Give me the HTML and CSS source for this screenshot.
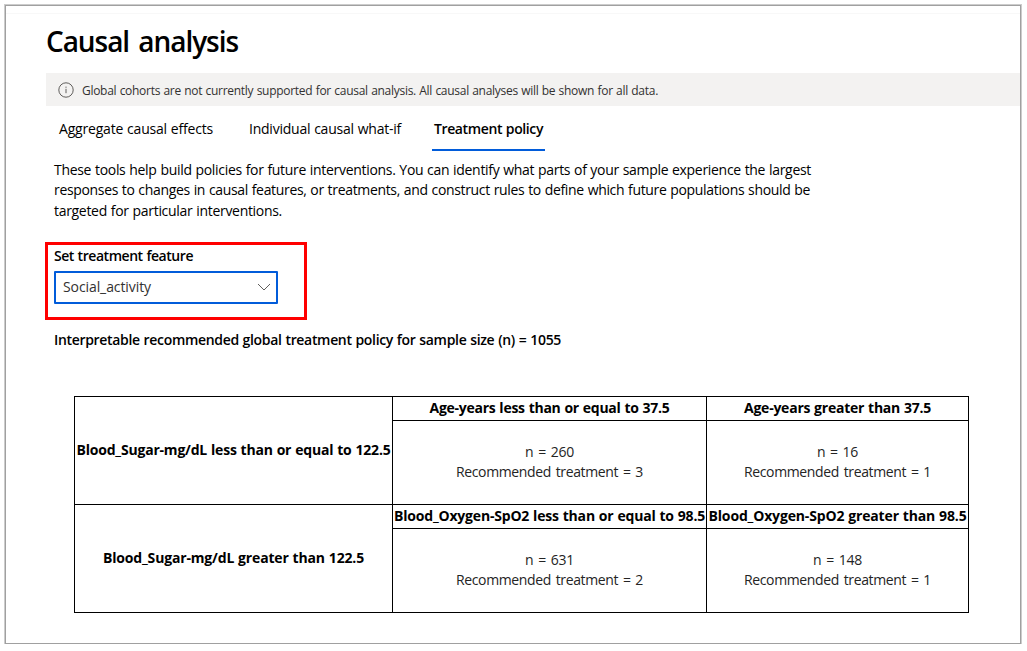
FILE: index.html
```html
<!DOCTYPE html>
<html lang="en"><head><meta charset="utf-8"><title>Causal analysis</title><link rel="stylesheet" href="styles.css"></head>
<body>
<main class="panel">
  <h1 class="title"><span class="fit" data-w="192">Causal analysis</span></h1>
  <div class="notice">
    <svg class="info" viewBox="0 0 16 16"><circle cx="8" cy="8" r="7.2"/><path d="M8 6.8v4.4M8 4.6v1.2"/></svg>
    <span class="fit notice-text" data-w="576">Global cohorts are not currently supported for causal analysis. All causal analyses will be shown for all data.</span>
  </div>
  <nav class="tabs">
    <a class="tab"><span class="fit" data-w="154">Aggregate causal effects</span></a>
    <a class="tab"><span class="fit" data-w="152">Individual causal what-if</span></a>
    <a class="tab active"><span class="fit" data-w="109">Treatment policy</span></a>
  </nav>
  <p class="intro"><span class="fit" data-w="757">These tools help build policies for future interventions. You can identify what parts of your sample experience the largest</span><br><span class="fit" data-w="756">responses to changes in causal features, or treatments, and construct rules to define which future populations should be</span><br><span class="fit" data-w="228">targeted for particular interventions.</span></p>
  <section class="feature">
    <label class="label"><span class="fit" data-w="139">Set treatment feature</span></label>
    <div class="select"><span class="fit" data-w="88">Social_activity</span><svg class="chevron" viewBox="0 0 14 8"><path d="M1 1l6 6 6-6"/></svg></div>
  </section>
  <h2 class="subtitle"><span class="fit" data-w="507">Interpretable recommended global treatment policy for sample size (n) = 1055</span></h2>
  <table class="policy">
    <colgroup><col class="c1"><col class="c2"><col class="c3"></colgroup>
    <tr class="head"><th rowspan="2"><span class="fit" data-w="314">Blood_Sugar-mg/dL less than or equal to 122.5</span></th><th><span class="fit" data-w="240">Age-years less than or equal to 37.5</span></th><th><span class="fit" data-w="187">Age-years greater than 37.5</span></th></tr>
    <tr class="body"><td><span class="fit" data-w="49">n = 260</span><br><span class="fit" data-w="187">Recommended treatment = 3</span></td><td><span class="fit" data-w="41">n = 16</span><br><span class="fit" data-w="187">Recommended treatment = 1</span></td></tr>
    <tr class="head"><th rowspan="2"><span class="fit" data-w="261">Blood_Sugar-mg/dL greater than 122.5</span></th><th><span class="fit" data-w="311">Blood_Oxygen-SpO2 less than or equal to 98.5</span></th><th><span class="fit" data-w="258">Blood_Oxygen-SpO2 greater than 98.5</span></th></tr>
    <tr class="body"><td><span class="fit" data-w="49">n = 631</span><br><span class="fit" data-w="187">Recommended treatment = 2</span></td><td><span class="fit" data-w="49">n = 148</span><br><span class="fit" data-w="187">Recommended treatment = 1</span></td></tr>
  </table>
</main>
<script src="fit.js"></script>
</body></html>
```
FILE: styles.css
```css
* { box-sizing: border-box; }
body { margin: 0; background: #fff; color: #000; font: 14px/20px "Open Sans", "Noto Sans", sans-serif; }
.panel { margin: 5px 0 0 5px; width: 1016px; height: 639px; border: 1px solid #a0a0a0; box-shadow: 0 0 0 1px #ccc; overflow: hidden; }
.panel::before { content: ""; display: block; margin-top: 7px; height: 1px; background: #f8f8f8; }
.fit { display: inline-block; white-space: nowrap; word-spacing: 0.5px; }
.title { margin: 7px 0 0 40px; height: 52px; font-size: 28px; line-height: 41px; font-weight: 600; }
.title .fit { word-spacing: 3px; }
.notice { margin-left: 40px; height: 33px; background: #f3f2f1; display: flex; align-items: center; padding: 0 0 0 12px; gap: 8px; font-size: 12px; color: #323130; }
.notice-text { padding-top: 2px; }
.info { width: 16px; height: 16px; fill: none; stroke: #605e5c; stroke-width: 1; }
.tabs { display: flex; margin-left: 53px; height: 45px; gap: 36px; }
.tab { padding-top: 13px; }
.tab.active { margin-left: -5px; padding-left: 2px; padding-right: 2px; border-bottom: 2px solid #015cda; font-weight: 600; }
.intro { margin: 9px 0 0 48px; line-height: 20.3px; }
.feature { margin: 21px 0 0 39px; width: 262px; height: 78px; border: 3px solid #f00; padding: 1px 0 0 6px; }
.label { display: block; height: 25px; line-height: 20px; font-weight: 600; }
.select { width: 224px; height: 33px; border: 2px solid #015cda; border-radius: 1px; padding: 0 5px 0 7px; display: flex; align-items: center; justify-content: space-between; color: #323130; }
.chevron { width: 14px; height: 8px; fill: none; stroke: #605e5c; stroke-width: 1; }
.subtitle { margin: 10px 0 0 48px; font-size: 14px; line-height: 20px; font-weight: 600; }
.policy { margin: 46px 0 0 68px; width: 895px; border-collapse: collapse; table-layout: fixed; text-align: center; }
.policy th, .policy td { border: 1px solid #000; padding: 0; }
.policy th { font-weight: 700; }
.policy td { color: #242424; line-height: 20.5px; }
.policy td .fit { word-spacing: 1.5px; }
.c1 { width: 318px; }
.c2 { width: 314px; }
.c3 { width: 262px; }
.head { height: 24px; }
.body { height: 84px; }
```
FILE: fit.js
```js
// Adjust letter spacing so each label keeps its designed width.
document.querySelectorAll('.fit').forEach(function (el) {
  var want = Number(el.dataset.w);
  var have = el.getBoundingClientRect().width;
  var gap = (want - have) / el.textContent.length;
  el.style.letterSpacing = gap + 'px';
});
```
